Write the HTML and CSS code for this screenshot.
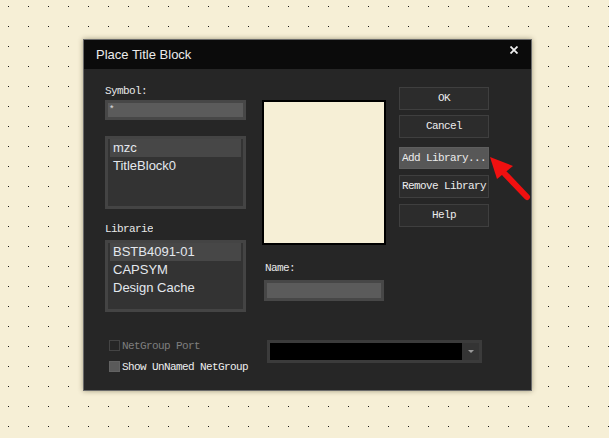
FILE: index.html
```html
<!DOCTYPE html>
<html>
<head>
<meta charset="utf-8">
<link rel="stylesheet" href="styles.css">
</head>
<body>
<div class="dialog">
  <div class="titlebar">
    <span class="title">Place Title Block</span>
    <svg class="close" width="8" height="8" viewBox="0 0 8 8"><path d="M0.5 0.5L7.5 7.5M7.5 0.5L0.5 7.5" stroke="#f0f0f0" stroke-width="1.8"/></svg>
  </div>
  <div class="body">
    <div class="main">
      <div class="col-left">
        <div class="label">Symbol:</div>
        <div class="input input-sym"><span class="star">*</span></div>
        <div class="list list-sym">
          <div class="item selected">mzc</div>
          <div class="item">TitleBlock0</div>
        </div>
        <div class="label label-lib">Libraries:</div>
        <div class="list list-lib">
          <div class="item selected">BSTB4091-01</div>
          <div class="item">CAPSYM</div>
          <div class="item">Design Cache</div>
        </div>
      </div>
      <div class="col-mid">
        <div class="preview"></div>
        <div class="label label-name">Name:</div>
        <div class="input input-name"></div>
      </div>
      <div class="col-btn">
        <div class="btn">OK</div>
        <div class="btn btn-cancel">Cancel</div>
        <div class="btn btn-add">Add Library...</div>
        <div class="btn btn-remove">Remove Library</div>
        <div class="btn btn-help">Help</div>
      </div>
    </div>
    <div class="bottom">
      <div class="checks">
        <div class="check disabled"><span class="box"></span><span>NetGroup Port</span></div>
        <div class="check check-show"><span class="box filled"></span><span>Show UnNamed NetGroup</span></div>
      </div>
      <div class="dropdown">
        <div class="dd-field"></div>
        <div class="dd-arrow"><span class="tri"></span></div>
      </div>
    </div>
  </div>
</div>
<svg class="arrow" width="60" height="60" viewBox="0 0 60 60">
  <path d="M25 24L47 47" stroke="#f01010" stroke-width="6" stroke-linecap="round"/>
  <polygon points="10,7 33,16 17,29" fill="#f01010"/>
</svg>
</body>
</html>
```
FILE: styles.css
```css
html, body {
  margin: 0;
  padding: 0;
}
body {
  width: 609px;
  height: 438px;
  overflow: hidden;
  position: relative;
  background-color: #f6efd6;
  background-image: conic-gradient(at 1px 1px, transparent 75%, #1a1a1a 0);
  background-size: 20px 20px;
  background-position: 8px 6px;
  font-family: "Liberation Sans", Arial, sans-serif;
}
.dialog {
  position: absolute;
  left: 83px;
  top: 39px;
  width: 449px;
  height: 352px;
  box-sizing: border-box;
  border: 1px solid #6a6a6a;
  background: #262626;
  box-shadow: 0 0 5px rgba(60, 50, 20, 0.45);
  display: flex;
  flex-direction: column;
}
.titlebar {
  height: 29px;
  background: #0b0b0b;
  display: flex;
  align-items: flex-start;
  justify-content: space-between;
  flex-shrink: 0;
}
.title {
  color: #ececec;
  font-size: 13px;
  line-height: 29px;
  padding-left: 12px;
}
.close {
  margin-top: 6px;
  margin-right: 13px;
}
.body {
  flex: 1;
  display: flex;
  flex-direction: column;
}
.main {
  display: flex;
  padding-left: 21px;
  height: 243px;
}
.label {
  font-family: "Liberation Mono", "Courier New", monospace;
  font-size: 11px;
  letter-spacing: -0.6px;
  line-height: 14px;
  color: #e8e8e8;
  white-space: nowrap;
}
.col-left {
  width: 141px;
  padding-top: 15px;
  display: flex;
  flex-direction: column;
}
.input {
  box-sizing: border-box;
  border: 3px solid #474747;
  background: #5b5b5b;
}
.input-sym {
  margin-top: 2px;
  height: 20px;
  position: relative;
}
.star {
  color: #e0e0e0;
  font-size: 9px;
  line-height: 10px;
  padding-left: 2px;
  display: block;
}
.list {
  box-sizing: border-box;
  border: 3px solid #444;
  background: #333;
  padding: 0 2px;
}
.list-sym {
  margin-top: 16px;
  height: 73px;
}
.label-lib {
  margin-top: 13px;
  width: 48px;
  overflow: hidden;
}
.list-lib {
  margin-top: 4px;
  height: 72px;
}
.item {
  font-size: 13px;
  line-height: 18px;
  color: #e4e8ee;
  padding-left: 3px;
  white-space: nowrap;
}
.item.selected {
  background: #474747;
}
.col-mid {
  margin-left: 16px;
  padding-top: 31px;
  width: 124px;
  display: flex;
  flex-direction: column;
}
.preview {
  box-sizing: border-box;
  height: 145px;
  width: 124px;
  background: #f6efd6;
  border: 2px solid #000;
}
.label-name {
  margin-top: 16px;
  padding-left: 3px;
}
.input-name {
  margin-top: 5px;
  margin-left: 2px;
  width: 120px;
  height: 21px;
}
.col-btn {
  margin-left: 13px;
  padding-top: 18px;
  width: 90px;
  display: flex;
  flex-direction: column;
}
.btn {
  box-sizing: border-box;
  height: 23px;
  border: 1px solid #3f3f3f;
  background: #2c2c2c;
  color: #ececec;
  font-family: "Liberation Mono", "Courier New", monospace;
  font-size: 11px;
  letter-spacing: -0.6px;
  line-height: 21px;
  text-align: center;
  white-space: nowrap;
}
.btn-cancel { margin-top: 5px; }
.btn-add {
  margin-top: 9px;
  height: 22px;
  line-height: 20px;
  background: #575757;
  border-color: #5e5e5e;
}
.btn-remove { margin-top: 6px; }
.btn-help { margin-top: 6px; }
.bottom {
  margin-top: 28px;
  display: flex;
  padding-left: 25px;
}
.checks {
  width: 158px;
  display: flex;
  flex-direction: column;
}
.check {
  display: flex;
  align-items: center;
  height: 11px;
  font-family: "Liberation Mono", "Courier New", monospace;
  font-size: 11px;
  letter-spacing: -0.6px;
  color: #eeeeee;
  white-space: nowrap;
}
.check.disabled { color: #7e7e7e; }
.check-show { margin-top: 10px; }
.box {
  box-sizing: border-box;
  width: 11px;
  height: 11px;
  border: 1px solid #444;
  margin-right: 2px;
  flex-shrink: 0;
}
.box.filled {
  background: #5a5a5a;
  border-color: #626262;
}
.dropdown {
  box-sizing: border-box;
  width: 215px;
  height: 23px;
  border: 3px solid #3b3b3b;
  display: flex;
}
.dd-field {
  flex: 1;
  background: #000;
}
.dd-arrow {
  width: 17px;
  background: #343434;
  display: flex;
  align-items: center;
  justify-content: center;
}
.tri {
  width: 0;
  height: 0;
  border-left: 3px solid transparent;
  border-right: 3px solid transparent;
  border-top: 3px solid #9a9a9a;
  margin-left: 1px;
}
.arrow {
  position: absolute;
  left: 480px;
  top: 150px;
}
```
